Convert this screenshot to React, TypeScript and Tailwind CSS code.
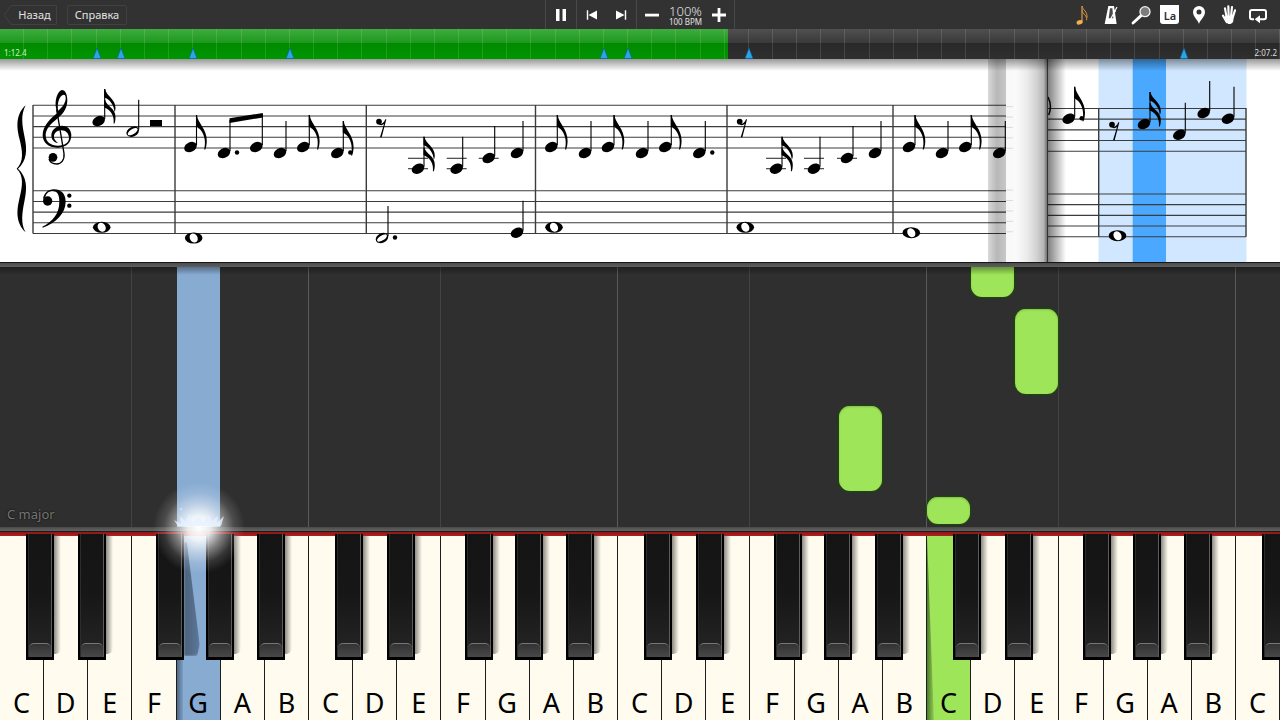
import React from "react";

const KEY_COUNT = 29;
const NAMES = ["C", "D", "E", "F", "G", "A", "B"];

/* ---------- toolbar ---------- */

function Icon({ children }: { children: React.ReactNode }) {
  return (
    <svg viewBox="0 0 72 72" className="h-6 w-6" fill="none" stroke="none" aria-hidden="true">
      {children}
    </svg>
  );
}

function ToolButton({ label, children }: { label: string; children: React.ReactNode }) {
  return (
    <button aria-label={label} className="flex h-full flex-1 items-center justify-center">
      {children}
    </button>
  );
}

function Toolbar() {
  return (
    <header className="grid h-[29px] grid-cols-[1fr_auto_1fr] items-center bg-[#323232] text-[#e2e2e2]">
      <nav className="flex items-center gap-[10px] pl-1">
        <button className="relative h-5 w-[53px] pl-2 text-[11px] leading-5">
          <svg
            viewBox="0 0 53 20"
            preserveAspectRatio="none"
            className="absolute inset-0 h-full w-full"
            aria-hidden="true"
          >
            <path d="M.5 10 7 .5H52.500V19.500H7Z" fill="none" stroke="#414141" />
          </svg>
          <span className="relative">Назад</span>
        </button>
        <button className="h-5 w-[60px] rounded-xs border border-[#414141] text-[11px] leading-[18px]">
          Справка
        </button>
      </nav>

      <div className="flex h-[29px] items-stretch border-x border-[#484848]">
        <button aria-label="Пауза" className="flex w-[31px] items-center justify-center border-r border-[#484848]">
          <svg viewBox="0 0 12 14" className="h-[14px] w-3" fill="#fff" aria-hidden="true">
            <path d="M1 1h3.500v12H1zM7.500 1H11v12H7.500z" />
          </svg>
        </button>
        <div className="flex w-[60px] border-r border-[#484848]">
          <button aria-label="Назад по записи" className="flex flex-1 items-center justify-center">
            <svg viewBox="0 0 12 12" className="h-3 w-3" fill="#fff" aria-hidden="true">
              <path d="M.8 1.200h1.400v9.600H.8zM2.500 6 11 1.500v9z" />
            </svg>
          </button>
          <button aria-label="Вперёд по записи" className="flex flex-1 items-center justify-center">
            <svg viewBox="0 0 12 12" className="h-3 w-3" fill="#fff" aria-hidden="true">
              <path d="M9.800 1.200h1.400v9.600H9.800zM9.500 6 1 1.500v9z" />
            </svg>
          </button>
        </div>
        <div className="flex w-[97px] items-center justify-between px-2">
          <button aria-label="Медленнее">
            <svg viewBox="0 0 14 14" className="h-[14px] w-[14px]" fill="#fff" aria-hidden="true">
              <path d="M0 5.700h14v2.800H0z" />
            </svg>
          </button>
          <div className="flex flex-col items-center">
            <span className="text-[13px] leading-[13px] font-light">100%</span>
            <span className="text-[8px] leading-[7px]">100 BPM</span>
          </div>
          <button aria-label="Быстрее">
            <svg viewBox="0 0 14 14" className="h-[14px] w-[14px]" fill="#fff" aria-hidden="true">
              <path d="M0 5.600h5.600V0h2.800v5.600H14v2.800H8.400V14H5.600V8.400H0z" />
            </svg>
          </button>
        </div>
      </div>

      <div className="mr-[7px] flex h-full w-[206px] items-center justify-self-end">
        <ToolButton label="Ноты">
          <Icon>
            <ellipse cx="29" cy="58" rx="9.500" ry="6.500" transform="rotate(-20 29 58)" fill="#f0b04c" />
            <path d="M36 56V9" stroke="#f0b04c" strokeWidth="3" />
            <path
              d="M36 9C38 22 53 24 51 44M36 22C38 34 52 36 50 52"
              stroke="#d99a3c"
              strokeWidth="3"
            />
          </Icon>
        </ToolButton>
        <ToolButton label="Метроном">
          <Icon>
            <path d="M28 9H45L53 63H17Z" fill="#fff" />
            <path d="M33 16H40L43 46H29Z" fill="#484848" />
            <path d="M34 50 54 12" stroke="#fff" strokeWidth="3.500" />
            <path d="M44 22 50 26" stroke="#fff" strokeWidth="4" />
          </Icon>
        </ToolButton>
        <ToolButton label="Масштаб">
          <Icon>
            <path d="M12 60 37 37" stroke="#fff" strokeWidth="8.500" strokeLinecap="round" />
            <circle cx="48" cy="26" r="15" fill="#7c7c7c" stroke="#f2f2f2" strokeWidth="4" />
          </Icon>
        </ToolButton>
        <ToolButton label="Названия нот">
          <span className="h-[19px] w-[19px] rounded-b-[3px] bg-white text-center text-[11px] leading-[21px] font-semibold text-[#303030]">
            La
          </span>
        </ToolButton>
        <ToolButton label="Закладка">
          <Icon>
            <path
              fillRule="evenodd"
              d="M36 63C34 52 18 42 18 27A18 18 0 0 1 54 27C54 42 38 52 36 63ZM36 19.500A7.500 7.500 0 1 0 36 34.500 7.500 7.500 0 0 0 36 19.500Z"
              fill="#fff"
            />
          </Icon>
        </ToolButton>
        <ToolButton label="Руки">
          <Icon>
            <path d="M26 38H50L49 54Q47 62 40 63H34Q30 61 27 55L22 46Z" fill="#fff" />
            <path
              d="M29 44 24 16M35 40 34 10M42 40 45 12M47 44 54 22M29 57 18 38"
              stroke="#fff"
              strokeWidth="6.500"
              strokeLinecap="round"
            />
          </Icon>
        </ToolButton>
        <ToolButton label="Повтор">
          <Icon>
            <path
              d="M24 49H18Q12 49 12 43V27Q12 21 18 21H54Q60 21 60 27V43Q60 49 54 49H40"
              stroke="#fff"
              strokeWidth="6"
            />
            <path d="M26 49 42 37V61Z" fill="#fff" />
          </Icon>
        </ToolButton>
      </div>
    </header>
  );
}

/* ---------- timeline ---------- */

const BOOKMARKS = [4, 5, 8, 12, 25, 26, 31, 49];
const MEASURES = 53;

function Timeline() {
  return (
    <div className="relative h-[30px] bg-[linear-gradient(#505050,#3a3a3a_45%,#292929_48%,#2f2f2f)]">
      <div className="absolute inset-y-0 left-0 w-[56.9%] bg-[linear-gradient(#3fab3f,#1d9a1d_45%,#008a00_48%,#009600)]" />
      <div className="relative flex h-full">
        {Array.from({ length: MEASURES }, (_, i) => (
          <div key={i} className="relative min-w-0 flex-1 border-r border-white/12">
            {BOOKMARKS.includes(i + 1) && (
              <svg
                viewBox="0 0 10 12"
                className="absolute -right-[6px] bottom-0 z-10 h-3 w-[10px]"
                aria-hidden="true"
              >
                <path d="M5 1 9 11.500H1z" fill="#2aa5e8" stroke="#0b5d8e" strokeWidth=".6" />
              </svg>
            )}
          </div>
        ))}
      </div>
      <span className="absolute bottom-0 left-1 text-[8px] leading-[12px] text-[#cfeecb]">1:12.4</span>
      <span className="absolute right-[3px] bottom-0 text-[8px] leading-[12px] text-[#dddddd]">2:07.2</span>
      <input
        type="range"
        aria-label="Позиция"
        min={0}
        max={1272}
        defaultValue={724}
        className="absolute inset-0 z-20 h-full w-full cursor-pointer opacity-0"
      />
    </div>
  );
}

/* ---------- sheet music ---------- */

const GAP = 10.67;

function Staves({ x1, x2, top }: { x1: number; x2: number; top: number }) {
  return (
    <g stroke="#3c3c3c" strokeWidth="1.1">
      {[0, 1, 2, 3, 4].map((i) => (
        <React.Fragment key={i}>
          <path d={`M${x1} ${top + i * GAP}H${x2}`} />
          <path d={`M${x1} ${top + 85.5 + i * GAP}H${x2}`} />
        </React.Fragment>
      ))}
    </g>
  );
}

type NoteKind = "q" | "e" | "s" | "h" | "w" | "b";

function Note({ k, x, y, dot, ledgers }: { k: NoteKind; x: number; y: number; dot?: number; ledgers?: number[] }) {
  const sx = x + 6;
  return (
    <g>
      {ledgers?.map((l) => (
        <path key={l} d={`M${x - 10} ${l}H${x + 10}`} stroke="#333" strokeWidth="1.1" />
      ))}
      {k === "w" ? (
        <>
          <ellipse cx={x} cy={y} rx="8.8" ry="5.5" />
          <ellipse cx={x} cy={y} rx="3.8" ry="4.8" fill="#fff" transform={`rotate(-32 ${x} ${y})`} />
        </>
      ) : (
        <>
          <ellipse cx={x} cy={y} rx="6.6" ry="4.8" transform={`rotate(-26 ${x} ${y})`} />
          {k === "h" && <ellipse cx={x} cy={y} rx="5.6" ry="2.5" fill="#fff" transform={`rotate(-32 ${x} ${y})`} />}
          <path d={`M${sx} ${y - 2}V${y - (k === "b" ? 33 : 32)}`} stroke="#000" strokeWidth="1.1" />
        </>
      )}
      {k === "e" && (
        <path
          transform={`translate(${sx - 0.5} ${y - 32})`}
          d="M0 0H1C1.500 8 11 14 10.800 26C10.700 30 10 33 9.300 34.500H8.200C9.800 27 9 21 5 15.500C3 13 0 11.500 0 11.500Z"
        />
      )}
      {k === "s" && (
        <g transform={`translate(${sx - 0.5} ${y - 32})`}>
          <path d="M0 0H1C2 7 11.500 10 11.300 19C11.200 21 10.800 22 10.300 23C9.800 17 7 13 4 10.500C2 9 0 8.500 0 8Z" />
          <path d="M0 11H1C2 17 11.500 19 11.300 28C11.200 31 11 33 10.300 34.500H9.400C10 28 8 24 4.500 21C2 19 0 18.500 0 18Z" />
        </g>
      )}
      {dot !== undefined && <circle cx={x + dot} cy={y - 0.5} r="2.2" />}
    </g>
  );
}

function EighthRest({ x, y }: { x: number; y: number }) {
  return (
    <g transform={`translate(${x} ${y}) scale(.3333)`}>
      <circle cx="9" cy="8" r="8.500" />
      <path d="M8 16C18 16 24 11 28 1H31L17 55H12L24 15C20 19 14 20 8 16Z" />
    </g>
  );
}

function Clefs() {
  return (
    <g transform="scale(.3333)">
      <path d="M77 136C45 165 51 205 58 235C68 275 72 305 50 326C72 347 68 377 58 417C51 447 45 487 77 517C61 490 67 455 73 425C83 380 80 350 54 326C80 302 83 272 73 227C67 197 61 165 77 136Z" />
      <path
        fillRule="evenodd"
        d="M186 90C176 92 165 112 167 138L171 160C150 177 128 198 128 226C128 249 148 264 174 263C200 262 214 247 214 226C214 208 202 197 186 197C168 197 154 210 154 227C154 238 162 247 174 249C165 242 161 236 162 228C163 218 172 211 184 211C198 211 207 221 207 234C207 248 194 257 174 257C152 257 137 246 137 226C137 206 152 192 174 174C193 158 202 142 202 120C202 104 196 90 186 90ZM191 104C196 104 198 110 197 118C195 132 185 144 175 152C171 138 175 106 191 104Z"
      />
      <path
        d="M170 148 192 280C194 300 184 312 170 312C158 312 150 306 147 297"
        fill="none"
        stroke="#000"
        strokeWidth="4"
      />
      <circle cx="159" cy="292" r="13" />
      <circle cx="143" cy="423" r="14" />
      <path d="M129 418C131 400 144 388 162 388C184 388 197 402 197 425C197 460 168 488 128 503L127 500C158 484 178 462 178 425C178 404 172 393 158 393C148 393 138 399 136 412Z" />
      <circle cx="208" cy="407" r="6.500" />
      <circle cx="208" cy="437" r="6.500" />
    </g>
  );
}

const LOW = [98.3, 108.7];
const MID = [98.3];

function CurrentPage() {
  return (
    <svg
      viewBox="0 -1 1006 203"
      preserveAspectRatio="xMinYMin slice"
      className="h-full w-full"
      role="img"
      aria-label="Нотный стан, текущая страница"
    >
      <Staves x1={33} x2={1006} top={45.3} />
      <path
        d="M33 45V173.500M175 45V173.500M366.300 45V173.500M535.500 45V173.500M727 45V173.500M893 45V173.500"
        stroke="#3c3c3c"
        strokeWidth="1.400"
      />
      <Clefs />
      <Note k="s" x={98.7} y={61} />
      <Note k="h" x={132.7} y={71.700} />
      <path d="M150 60H162V66H150Z" />
      <Note k="w" x={101.700} y={167.300} />

      <Note k="e" x={190.500} y={87} />
      <Note k="b" x={224} y={93} dot={13} />
      <Note k="b" x={256.300} y={87} />
      <path d="M229.500 58.300 262.800 53V57.500L229.500 63Z" />
      <Note k="q" x={280} y={93} />
      <Note k="e" x={303.300} y={87} />
      <Note k="e" x={337.300} y={93} dot={13} />
      <Note k="w" x={193.700} y={178} />

      <EighthRest x={376} y={59} />
      <Note k="s" x={418} y={108.700} ledgers={LOW} />
      <Note k="q" x={456.700} y={108.700} ledgers={LOW} />
      <Note k="q" x={488.700} y={98} ledgers={MID} />
      <Note k="q" x={517} y={93} />
      <Note k="h" x={382} y={178} dot={13} />
      <Note k="q" x={517} y={172.700} />

      <Note k="e" x={551.300} y={87} />
      <Note k="q" x={585} y={93} />
      <Note k="e" x={608} y={87} />
      <Note k="q" x={642} y={93} />
      <Note k="e" x={665.300} y={87} />
      <Note k="q" x={699.300} y={93} dot={13} />
      <Note k="w" x={554} y={167.300} />

      <EighthRest x={736.700} y={59} />
      <Note k="s" x={776} y={108.700} ledgers={LOW} />
      <Note k="q" x={814} y={108.700} ledgers={LOW} />
      <Note k="q" x={847} y={98} ledgers={MID} />
      <Note k="q" x={875} y={93} />
      <Note k="w" x={745.300} y={167.300} />

      <Note k="e" x={909} y={87} />
      <Note k="q" x={942} y={93} />
      <Note k="e" x={965.300} y={87} />
      <Note k="q" x={999.300} y={93} />
      <Note k="w" x={911.300} y={172.700} />
    </svg>
  );
}

function NextPage() {
  return (
    <svg
      viewBox="1048 -1 232 203"
      preserveAspectRatio="xMinYMin slice"
      className="h-full w-full"
      role="img"
      aria-label="Нотный стан, следующая страница"
    >
      <path d="M1098.500 -1H1246.500V202H1098.500Z" fill="#d0e7ff" />
      <path d="M1132.700 -1H1166V202H1132.700Z" fill="#4aa8ff" />
      <Staves x1={1048} x2={1246} top={48.5} />
      <path d="M1098.700 48V176.700M1246 48V176.700" stroke="#3c3c3c" strokeWidth="1.400" />
      <path d="M1048 37Q1052.500 46 1048.700 55" fill="none" stroke="#000" strokeWidth="1.500" />
      <Note k="e" x={1068.700} y={58.700} dot={13} />
      <EighthRest x={1109} y={62} />
      <Note k="s" x={1144} y={64} />
      <Note k="q" x={1179.300} y={74.700} />
      <Note k="q" x={1203.700} y={53} />
      <Note k="q" x={1228} y={58.700} />
      <Note k="w" x={1117.500} y={175.700} />
    </svg>
  );
}

function Score() {
  return (
    <section className="relative flex h-[203px] overflow-hidden bg-white">
      <div className="relative min-w-0 flex-1">
        <CurrentPage />
        <div className="absolute inset-y-0 right-0 w-[18px] bg-linear-to-r from-black/15 via-black/28 to-black/22" />
      </div>
      <div className="w-[42px] border-r border-[#333] bg-[linear-gradient(90deg,#f8f8f8,#fafafa_25%,#ececec_50%,#d2d2d2_75%,#b4b4b4_92%,#707070)]">
        <svg viewBox="1006 -1 42 203" className="h-full w-full opacity-15" aria-hidden="true">
          <Staves x1={1006} x2={1013} top={45.3} />
        </svg>
      </div>
      <div className="relative w-[232px]">
        <NextPage />
        <div className="absolute inset-y-0 left-0 w-[18px] bg-linear-to-r from-black/50 via-black/25 to-transparent" />
      </div>
      <div className="absolute inset-x-0 top-0 h-3 bg-linear-to-b from-black/40 to-transparent" />
    </section>
  );
}

/* ---------- falling notes ---------- */

const FALLING: Record<number, string> = {
  19: "bottom-[36px] h-[85px] rounded-[11px]",
  21: "bottom-[3px] h-[27px] rounded-[11px]",
  22: "-top-3 bottom-[230px] rounded-b-[11px]",
  23: "bottom-[133px] h-[85px] rounded-[11px]",
};

function Lanes() {
  return (
    <section className="relative flex min-h-[259px] flex-1 bg-[#2f2f2f]">
      <div className="flex min-w-0 flex-1 overflow-hidden">
        {Array.from({ length: KEY_COUNT }, (_, i) => {
          const step = i % 7;
          const line =
            step === 6
              ? "border-r border-[#5a5a5a]"
              : step === 2
                ? "border-r border-[#434343]"
                : "border-r border-transparent";
          return (
            <div key={i} className={`relative min-w-0 flex-1 ${line}`}>
              {FALLING[i] && (
                <div
                  className={`absolute inset-x-0 bg-[#9fe55a] shadow-[0_0_2px_1px_#1d4a08,inset_0_1px_2px_#84bd4e] ${FALLING[i]}`}
                />
              )}
              {i === 4 && <div className="absolute inset-0 bg-[#88abd2]" />}
            </div>
          );
        })}
      </div>
      <div className="absolute inset-x-0 top-0 h-2 bg-linear-to-b from-black/35 to-transparent" />
      <p className="absolute bottom-1 left-[7px] text-[13px] leading-[18px] text-[#767676] [text-shadow:0_0_2px_#000]">
        C major
      </p>
    </section>
  );
}

/* ---------- keyboard ---------- */

const BLACK_OFFSET: Record<number, string> = {
  0: "left-[59%]",
  1: "left-[77%]",
  3: "left-[53%]",
  4: "left-[67%]",
  5: "left-[83%]",
};

function BlackKey({ offset, pressedNext }: { offset: string; pressedNext: boolean }) {
  return (
    <button
      aria-label="Чёрная клавиша"
      className={`absolute -top-[2px] z-20 h-[126px] w-[63%] bg-black ${offset}`}
    >
      {pressedNext ? (
        <span className="absolute top-2 left-full h-[114px] w-4 rounded-br-md bg-linear-to-r from-[#4c617a] to-[#5d789a] blur-[1px] [clip-path:polygon(0_0,20%_0,100%_90%,85%_100%,0_100%)]" />
      ) : (
        <span className="absolute top-[2px] left-full h-[118px] w-[7px] rounded-br-md bg-linear-to-r from-black/45 to-transparent" />
      )}
      <span className="absolute inset-x-[2px] top-0 bottom-[3px] flex flex-col border-x border-r-[#5c5c5c] border-l-[#2c2c2c] bg-linear-to-b from-[#141414] via-[#171717] to-[#262626]">
        <span className="mt-auto h-[14px] rounded-t-[5px] border-t border-[#767676] bg-linear-to-b from-[#333333] to-[#484848]" />
      </span>
    </button>
  );
}

function Glow() {
  return (
    <div className="pointer-events-none absolute -top-[54px] left-1/2 z-30 h-[92px] w-[92px] -translate-x-1/2 bg-[radial-gradient(closest-side,rgba(255,255,255,1)_0%,rgba(255,255,255,0.88)_25%,rgba(255,255,255,0.45)_52%,rgba(255,255,255,0.14)_76%,transparent_100%)]">
      <svg viewBox="10 10 92 92" className="h-full w-full" aria-hidden="true">
        <path
          d="M35 54 31 48 38 52 37 44 43 50 46 42 49 50 56 45 60 50 66 43 68 50 75 44 74 51 81 44 78 54Z"
          fill="#e6f1ff"
          opacity=".8"
        />
        <circle cx="38" cy="37" r="1" fill="#d7e8ff" />
      </svg>
    </div>
  );
}

function Keyboard() {
  return (
    <section aria-label="Клавиатура" className="h-[193px]">
      <div className="h-[5px] border-b border-[#1c1c1c] bg-linear-to-b from-[#4a4a4a] to-[#636363]" />
      <div className="h-1 bg-linear-to-b from-[#8c1717] to-[#b22020]" />
      <div className="relative h-[184px]">
        <div className="absolute inset-x-0 inset-y-0 flex overflow-x-clip">
          {Array.from({ length: KEY_COUNT }, (_, i) => {
            const step = i % 7;
            const fill = i === 4 ? "bg-[#88abd2]" : i === 21 ? "bg-[#9fe55a]" : "bg-[#fffbee]";
            return (
              <div key={i} className="relative min-w-0 flex-1">
                <button
                  className={`relative flex h-full w-full items-end justify-center border-r border-[#1d1d1d] pb-[1px] text-[27px] leading-[32px] text-black ${fill}`}
                >
                  {i === 4 && (
                    <span className="absolute bottom-0 left-0 h-[62px] w-[6px] bg-linear-to-r from-[#526882] to-[#7d9ec4]" />
                  )}
                  {i === 21 && (
                    <span className="absolute inset-y-0 left-0 w-[7px] bg-linear-to-r from-[#4f7a2c] to-[#8fcf52] [clip-path:polygon(0_0,100%_100%,0_100%)]" />
                  )}
                  <span className="relative">{NAMES[step]}</span>
                </button>
                {BLACK_OFFSET[step] && <BlackKey offset={BLACK_OFFSET[step]} pressedNext={i === 3} />}
                {i === 4 && <Glow />}
              </div>
            );
          })}
        </div>
      </div>
    </section>
  );
}

function Divider() {
  return <div className="h-[5px] border-t border-[#161616] bg-linear-to-b from-[#4c4c4c] to-[#5e5e5e]" />;
}

export default function App() {
  return (
    <main className="flex min-h-screen flex-col overflow-hidden bg-[#2f2f2f] font-['Noto_Sans','Open_Sans',sans-serif]">
      <Toolbar />
      <Timeline />
      <Score />
      <Divider />
      <Lanes />
      <Keyboard />
    </main>
  );
}
